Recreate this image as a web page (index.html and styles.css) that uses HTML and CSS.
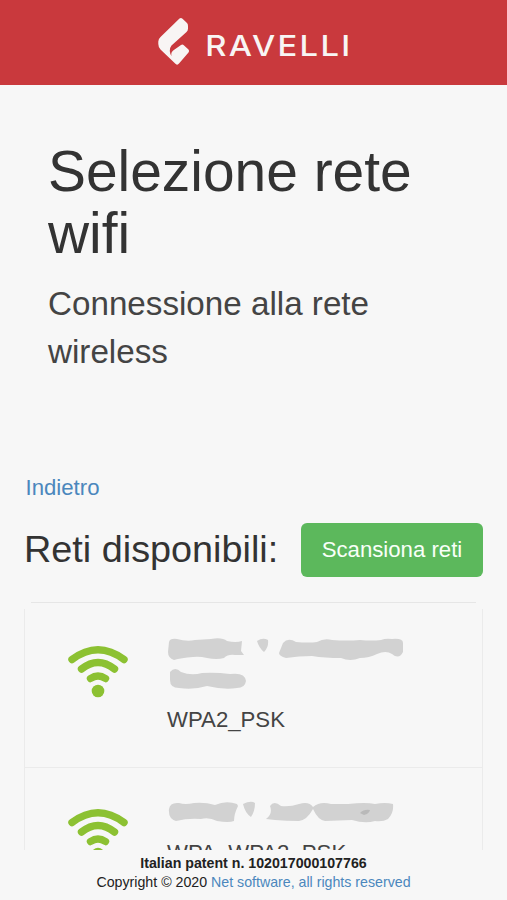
FILE: index.html
```html
<!DOCTYPE html>
<html lang="it">
<head>
<meta charset="utf-8">
<title>Selezione rete wifi</title>
<link rel="stylesheet" href="styles.css">
</head>
<body>
<header class="topbar">
  <svg class="logo" viewBox="0 0 210 60" role="img" aria-label="Ravelli">
    <path class="mark" d="M29.500 8.600 Q31 7.500 32.500 8.800 L37 13 Q38 14 38 16 V18.500 Q38 20.500 36.500 22 L21.500 35.500 Q19.500 38 19.800 41 Q20 44 21.500 46 Q20.500 42.500 23.500 40.300 L31 35 Q32.500 34 33.800 35.300 L38.500 39.500 Q39.800 41 38.500 42.500 L29 53.500 Q27.500 55.500 25.700 54 L10.500 39.500 Q8.300 37 8.300 34 V31.500 Q8.300 29 10.500 27 Z"/>
    <text class="brand" transform="translate(55.300 46) scale(1.15 1)" textLength="126" lengthAdjust="spacing">RAVELLI</text>
  </svg>
</header>
<main class="page">
  <section class="intro">
    <h1>Selezione rete wifi</h1>
    <p>Connessione alla rete wireless</p>
  </section>
  <a class="back" href="#">Indietro</a>
  <div class="toolbar">
    <h2>Reti disponibili:</h2>
    <button class="scan" type="button">Scansiona reti</button>
  </div>
  <ul class="networks">
    <li class="network">
      <svg class="wifi" viewBox="0 0 60 54">
        <path d="M4 14.500 Q30 -5 56 14.500M13.500 24 Q30 11 46.500 24M22.500 33.500 Q30 28.500 37.500 33.500"/>
        <circle cx="30" cy="46" r="6.300"/>
      </svg>
      <div class="details">
        <svg class="name tall" viewBox="0 0 240 54">
          <path d="M2 4 Q3 0 10 1 Q20 4 28 2 L44 1 Q55-1 60 3 Q69 5 75 3 L74 13 L77 17 L68 17 Q61 16 57 20 Q50 22 40 20 Q32 18 26 19 Q14 20 7 22 Q1 20 1 14Z M90 3 Q96-1 101 2 Q102 9 97 14 Q92 10 90 3Z M112 15 L116 5 Q121-1 129 4 Q142 5 150 4 Q157 0 165 2 Q180 3 193 2 Q205 3 214 2 Q219 0 225 1 Q236 0 236 5 V14 Q232 22 225 16 Q219 12 210 16 Q202 20 193 20 Q183 24 174 20 Q158 20 145 18 Q132 18 119 20 Q112 18 112 15Z M3 34 Q8 28 14 34 Q24 38 35 35 Q48 34 63 36 Q78 34 79 43 Q78 50 70 50 Q57 52 40 48 Q27 52 12 50 Q3 50 3 42Z"/>
        </svg>
        <span>WPA2_PSK</span>
      </div>
    </li>
    <li class="network">
      <svg class="wifi" viewBox="0 0 60 54">
        <path d="M4 14.500 Q30 -5 56 14.500M13.500 24 Q30 11 46.500 24M22.500 33.500 Q30 28.500 37.500 33.500"/>
        <circle cx="30" cy="46" r="6.300"/>
      </svg>
      <div class="details">
        <svg class="name" viewBox="0 0 240 24">
          <path d="M2 8 Q3 1 12 2 Q18 4 27 2 Q38 1 48 4 Q59-1 70 3 L71 5 Q67 13 67 20 Q62 22 50 20 Q42 16 34 18 Q21 17 9 20 Q1 18 2 8Z M76 3 Q84-1 88 2 Q88 10 84 16 Q78 12 76 3Z M103 5 Q107-1 114 5 Q123 6 132 3 Q142 0 146 6 Q153 0 164 3 L181 3 Q199 1 208 3 Q218 1 226 3 Q227 12 221 18 Q216 21 208 20 Q198 23 185 19 L158 20 Q151 19 146 8 Q140 19 132 20 Q119 20 108 19 L99 18 Q106 13 103 5Z"/>
          <path class="smudge" d="M193 12 Q197 8 203 9 Q202 13 197 14Z"/>
        </svg>
        <span>WPA_WPA2_PSK</span>
      </div>
    </li>
  </ul>
</main>
<footer class="footer">
  <strong>Italian patent n. 102017000107766</strong>
  <div class="copyright">Copyright © 2020 <a href="#">Net software, all rights reserved</a></div>
</footer>
</body>
</html>
```
FILE: styles.css
```css
* { box-sizing: border-box; }

body {
  display: flex;
  flex-direction: column;
  height: 900px;
  margin: 0;
  overflow: hidden;
  background: #f7f7f7;
  color: #333;
  font-family: "Liberation Sans", Arial, sans-serif;
  font-size: 22.200px;
}

h1, h2, p, ul { margin: 0; padding: 0; font-weight: 400; }
a { color: #4b87bd; text-decoration: none; }

.topbar {
  flex: none;
  height: 85px;
  padding: 10px 0 0 150px;
  background: #c9393d;
}
.logo { display: block; width: 210px; height: 60px; }
.mark { fill: #f8f5f4; }
.brand {
  fill: #f8f5f4;
  font-family: Inter, sans-serif;
  font-size: 28.500px;
  font-weight: 500;
}

.page {
  flex: 1;
  min-height: 0;
  overflow: hidden;
  padding: 56px 24px 0;
}
.intro { height: 332px; padding-left: 24px; }
h1 { width: 390px; font-size: 56.900px; line-height: 61.600px; }
.intro p {
  width: 370px;
  margin-top: 16px;
  color: #444;
  font-size: 33.200px;
  line-height: 48px;
}
.back { display: block; padding-left: 1.500px; line-height: 30px; }

.toolbar {
  display: flex;
  align-items: center;
  justify-content: space-between;
  height: 54px;
  margin-top: 20px;
}
h2 { margin-top: -2px; font-size: 37.800px; line-height: 44px; white-space: nowrap; }
.scan {
  width: 182px;
  height: 54px;
  padding: 0;
  border: 0;
  border-radius: 6px;
  background: #5cb85c;
  color: #f8fff8;
  font: inherit;
}

.networks { margin-top: 25px; list-style: none; }
.networks::before {
  content: "";
  display: block;
  height: 6px;
  margin: 0 7px;
  border-top: 1px solid #e6e6e6;
}
.network {
  display: flex;
  height: 165px;
  padding: 33px 0 0 43px;
  border: solid #ebebeb;
  border-width: 0 1px 1px;
}
.network:first-child { height: 159px; padding-top: 29px; }
.wifi { flex: none; width: 60px; height: 54px; margin-top: 7px; }
.wifi path { fill: none; stroke: #8cc132; stroke-width: 7.400; stroke-linecap: round; }
.wifi circle { fill: #8cc132; }
.details { margin-left: 39px; color: #444; }
.details span { display: block; margin-top: 13px; line-height: 30px; }
.name { display: block; width: 240px; height: 24px; fill: #d2d2d2; }
.name.tall { height: 54px; }
.smudge { fill: #b9b9b9; }

.footer {
  flex: none;
  height: 50px;
  padding-top: 4px;
  color: #222;
  font-size: 14.200px;
  line-height: 19px;
  text-align: center;
}
.footer strong { display: block; }
```
